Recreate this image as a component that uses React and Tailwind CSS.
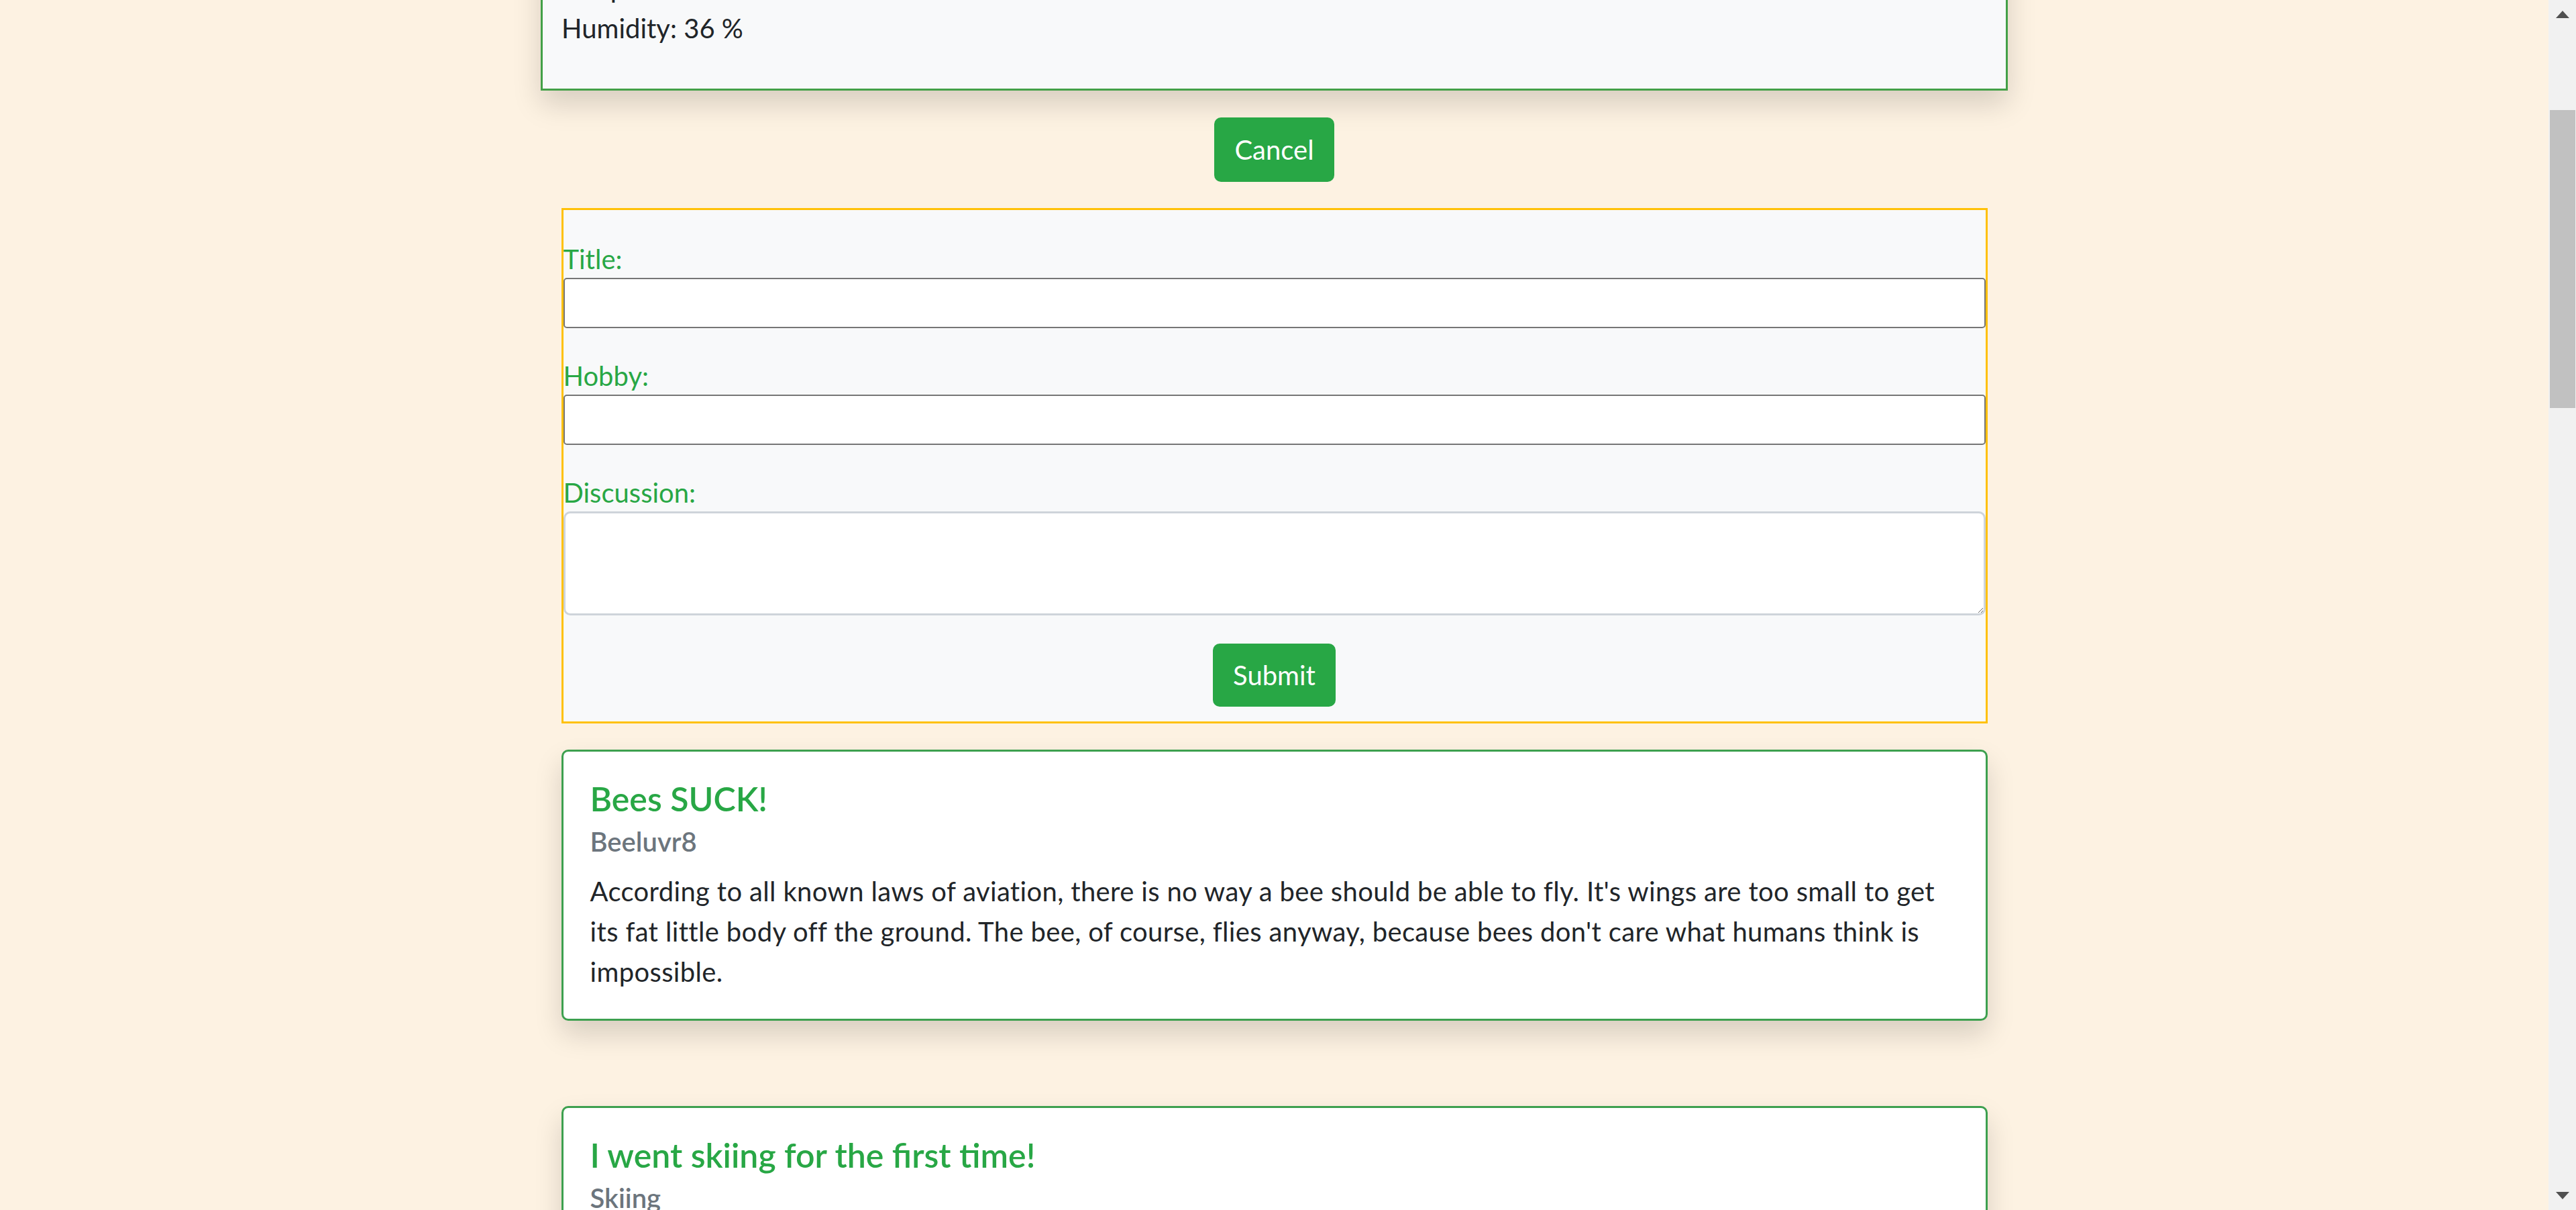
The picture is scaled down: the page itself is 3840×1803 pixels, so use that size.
import React from 'react';

const posts = [
  {
    title: 'Bees SUCK!',
    hobby: 'Beeluvr8',
    body: "According to all known laws of aviation, there is no way a bee should be able to fly. It's wings are too small to get its fat little body off the ground. The bee, of course, flies anyway, because bees don't care what humans think is impossible.",
  },
  {
    title: 'I went skiing for the first time!',
    hobby: 'Skiing',
    body: 'It was cold, I fell down a lot, and I loved every minute of it. Can not wait to go back next weekend.',
  },
];

const Scrollbar = () => (
  <div className="flex h-full w-[41px] shrink-0 flex-col items-center bg-[#f1f1f1]">
    <svg className="mt-[16px] h-[11px] w-[20px] shrink-0" viewBox="0 0 20 11">
      <polygon points="10,0 20,11 0,11" fill="#505050" />
    </svg>
    <div className="mt-[137px] h-[444px] w-[38px] shrink-0 bg-[#c1c1c1]" />
    <div className="flex-1" />
    <svg className="mb-[16px] h-[11px] w-[20px] shrink-0" viewBox="0 0 20 11">
      <polygon points="0,0 20,0 10,11" fill="#505050" />
    </svg>
  </div>
);

const PostCard = ({ post }) => (
  <div className="w-[2126px] shrink-0 rounded-[10px] border-[3px] border-[#3da04f] bg-white p-[40px] shadow-[0_20px_40px_rgba(0,0,0,0.15)]">
    <h5 className="text-[50px] font-semibold leading-[60px] text-[#28a745]">{post.title}</h5>
    <h6 className="mt-[10px] text-[40px] font-semibold leading-[48px] text-[#6c757d]">{post.hobby}</h6>
    <p className="mt-[20px] text-[40px] leading-[60px] tracking-[0.35px] text-[#212529]">{post.body}</p>
  </div>
);

export default function App() {
  return (
    <div className="flex h-[1803px] w-[3840px] overflow-hidden bg-[#fdf2e2] font-['Lato','Liberation_Sans',sans-serif]">
      <main className="flex min-w-0 flex-1 flex-col items-center">
        {/* Weather card, scrolled partly out of view */}
        <div className="-mt-[71px] w-[2187px] shrink-0 border-[3px] border-[#43a047] bg-[#f8f9fa] px-[28px] py-[20px] text-[40px] leading-[60px] text-[#212529] shadow-[0_20px_40px_rgba(0,0,0,0.15)]">
          <div>Temperature: 64 °F</div>
          <div className="mb-[40px]">Humidity: 36 %</div>
        </div>

        <button className="mt-[40px] h-[96px] shrink-0 rounded-[10px] bg-[#28a745] px-[30px] text-[40px] text-white">
          Cancel
        </button>

        {/* New post form */}
        <form className="mt-[39px] flex w-[2126px] shrink-0 flex-col border-[3px] border-[#ffc107] bg-[#f8f9fa] pt-[45px] pb-[22px]">
          <label className="text-[40px] leading-[56px] text-[#28a745]">Title:</label>
          <input className="h-[75px] w-full shrink-0 rounded-[5px] border-2 border-[#767676] bg-white" />
          <label className="mt-[43px] text-[40px] leading-[56px] text-[#28a745]">Hobby:</label>
          <input className="h-[75px] w-full shrink-0 rounded-[5px] border-2 border-[#767676] bg-white" />
          <label className="mt-[43px] text-[40px] leading-[56px] text-[#28a745]">Discussion:</label>
          <textarea className="h-[155px] w-full shrink-0 resize-y rounded-[10px] border-[3px] border-[#ced4da] bg-white" />
          <div className="mt-[42px] flex justify-center">
            <button type="button" className="h-[94px] rounded-[10px] bg-[#28a745] px-[30px] text-[40px] text-white">
              Submit
            </button>
          </div>
        </form>

        <div className="mt-[39px] flex shrink-0 flex-col gap-[127px]">
          {posts.map((post, index) => (
            <PostCard key={index} post={post} />
          ))}
        </div>
      </main>
      <Scrollbar />
    </div>
  );
}
